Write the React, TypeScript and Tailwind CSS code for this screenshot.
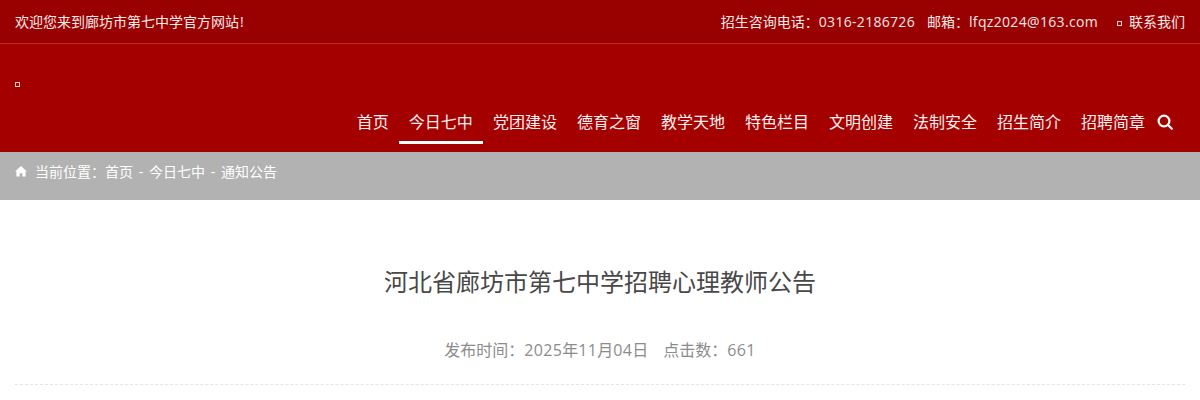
import React from "react";

const font = { fontFamily: '"Open Sans","Noto Sans CJK SC",sans-serif' };
const nav = ["首页", "今日七中", "党团建设", "德育之窗", "教学天地", "特色栏目", "文明创建", "法制安全", "招生简介", "招聘简章"];

function Tofu() {
  return <span className="inline-block w-[5px] h-[5px] border border-[#f3d5d5]" />;
}

export default function App() {
  return (
    <div className="w-[1200px] h-[400px] overflow-hidden bg-white" style={font}>
      <div className="h-[44px] bg-[#990000] border-b border-[#b72b2b] px-[15px] flex items-center justify-between text-[14px] text-[#f5e8e8]">
        <span>欢迎您来到廊坊市第七中学官方网站<span className="ml-[1px]">!</span></span>
        <div className="flex items-center">
          <span>招生咨询电话：<span className="tracking-[0.3px]">0316-2186726</span></span>
          <span className="ml-[12px]">邮箱：<span className="tracking-[0.33px]">lfqz2024@163.com</span></span>
          <span className="ml-[19px] mr-[7px] mt-[4px] flex items-center"><Tofu /></span>
          <span>联系我们</span>
        </div>
      </div>
      <div className="h-[108px] bg-[#a50000] flex flex-col">
        <div className="h-[52px] px-[15px] pt-[38px] flex"><Tofu /></div>
        <div className="flex justify-end items-start pr-[27px] text-[16px] text-[#fbeeee] mt-[6px]">
          {nav.map((n, i) => (
            <span key={n} className={"px-[10px] h-[42px] leading-[40px] whitespace-nowrap " + (i === 1 ? "border-b-[3px] border-white" : "")}>{n}</span>
          ))}
          <svg className="ml-[2px] mt-[12px]" width="16" height="16" viewBox="0 0 16 16" fill="none" stroke="#fff" strokeWidth="2.2">
            <circle cx="7" cy="7" r="5.4" />
            <path d="M11 11 L14.8 14.8" strokeLinecap="round" />
          </svg>
        </div>
      </div>
      <div className="h-[48px] bg-[#b2b2b2] px-[15px] pb-[9px] flex items-center text-[14px] text-white">
        <svg width="12" height="11" viewBox="0 0 12 11" fill="#fff">
          <path d="M6 0 L12 5.6 L10.6 5.6 L10.6 10.6 L7.4 10.6 L7.4 7.2 L4.6 7.2 L4.6 10.6 L1.4 10.6 L1.4 5.6 L0 5.6 Z" />
        </svg>
        <span className="ml-[8px]">当前位置：首页</span>
        <span className="w-[16px] text-center">-</span>
        <span>今日七中</span>
        <span className="w-[16px] text-center">-</span>
        <span>通知公告</span>
      </div>
      <div className="px-[15px]">
        <h1 className="text-[24px] leading-[34px] text-[#484848] text-center mt-[65px] font-normal">河北省廊坊市第七中学招聘心理教师公告</h1>
        <div className="mt-[36px] h-[50px] text-[16px] leading-[30px] text-[#8c8c8c] text-center border-b border-dashed border-[#e5e5e5]">
          <span>发布时间：<span className="tracking-[0.35px]">2025</span>年<span className="tracking-[0.35px]">11</span>月<span className="tracking-[0.35px]">04</span>日</span>
          <span className="ml-[15px]">点击数：<span className="tracking-[0.35px]">661</span></span>
        </div>
      </div>
    </div>
  );
}
